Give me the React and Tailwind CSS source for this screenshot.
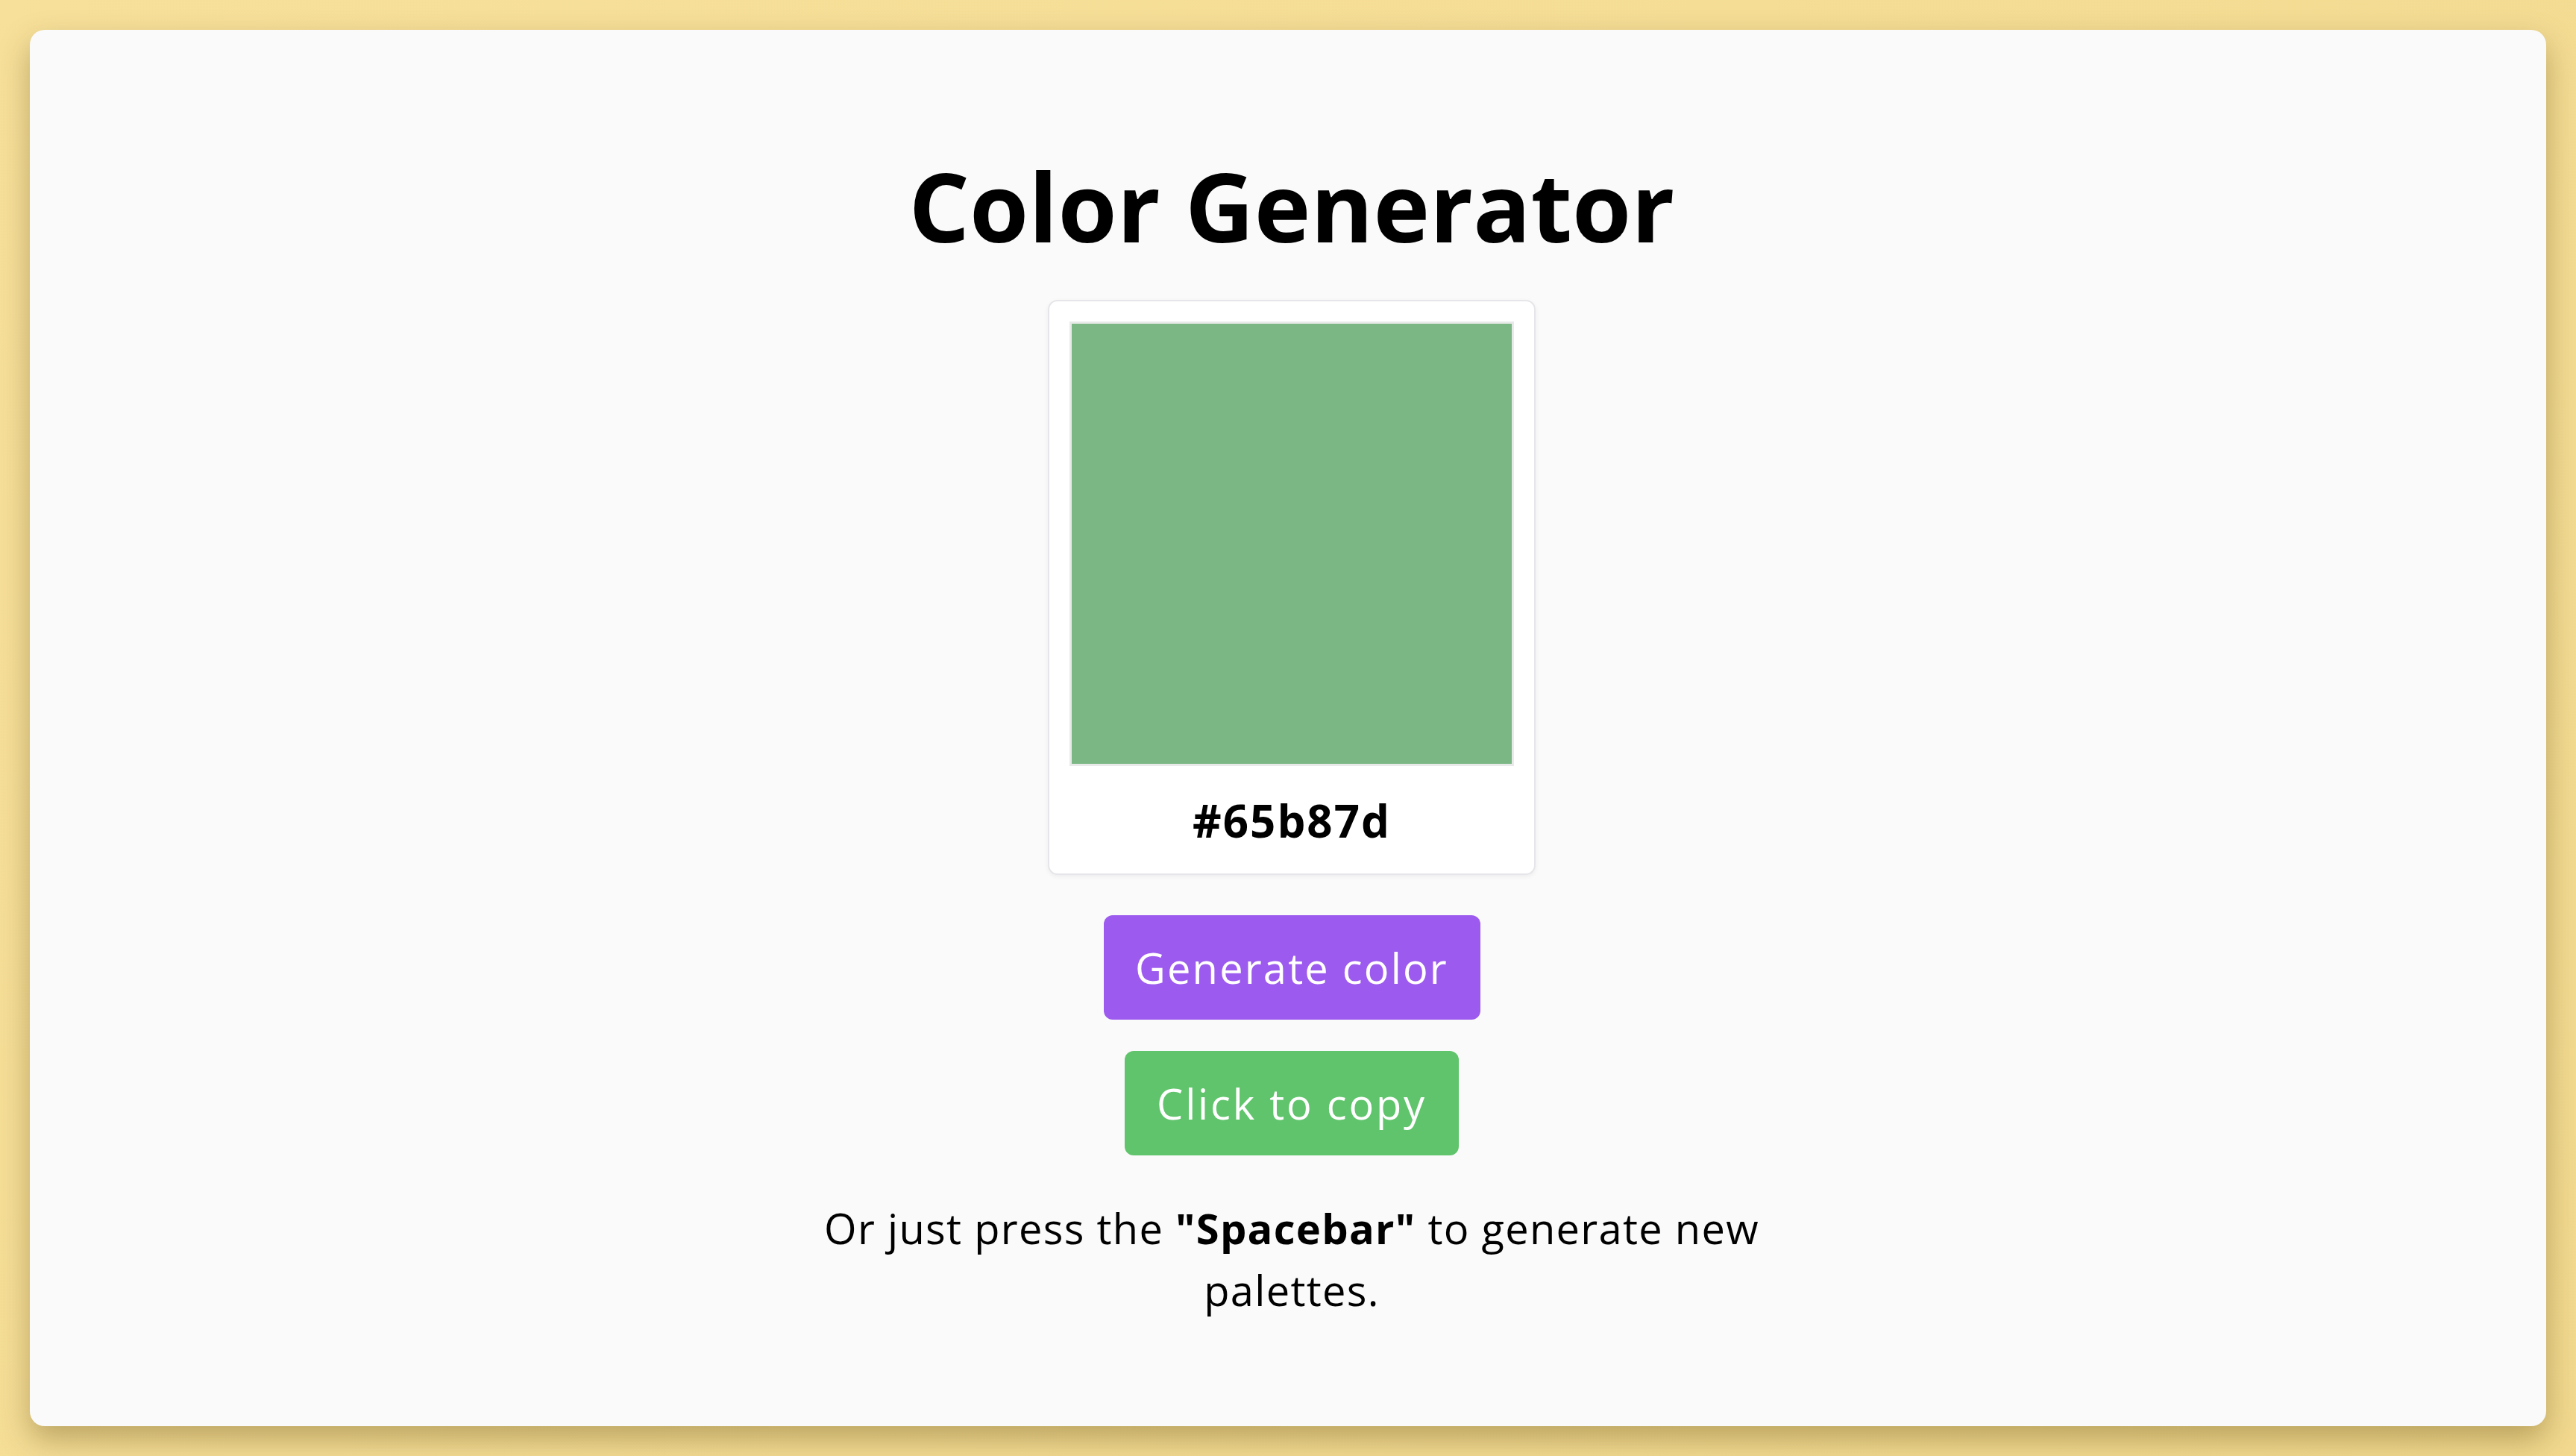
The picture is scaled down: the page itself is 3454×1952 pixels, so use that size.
export default function App() {
  return (
    <div className="min-h-screen w-full bg-[linear-gradient(135deg,#f7e09a_0%,#f2d98f_100%)] p-[40px]" style={{ height: 1952 }}>
      <div className="h-[1872px] w-full rounded-[20px] bg-[#fafafa] shadow-[0_18px_40px_rgba(80,60,0,0.35)] flex flex-col items-center pt-[172px] pl-[10px] font-['Open_Sans',sans-serif] text-black">
        <h1 className="text-[128px] leading-[128px] font-bold tracking-[0px] m-0">Color Generator</h1>
        <div className="mt-[62px] w-[654px] rounded-[13px] border-2 border-[#e6e6ea] bg-white px-[27px] pt-[27px] pb-[40px] shadow-[0_2px_6px_rgba(0,0,0,0.06)] flex flex-col items-center">
          <div className="w-[596px] h-[596px] border-[3px] border-[#e8eae9] bg-[#7bb784]" />
          <div className="mt-[42px] text-[60px] leading-[62px] font-bold tracking-[2px]">#65b87d</div>
        </div>
        <button className="mt-[54px] h-[140px] w-[505px] rounded-[12px] bg-[#9c5aee] text-white text-[56px] tracking-[2.2px] flex items-center justify-center">Generate color</button>
        <button className="mt-[42px] h-[140px] w-[448px] rounded-[12px] bg-[#60c46c] text-white text-[56px] tracking-[2.8px] flex items-center justify-center">Click to copy</button>
        <p className="mt-[56px] text-center text-[56px] leading-[83px] tracking-[1.3px]">
          Or just press the <b>"Spacebar"</b> to generate new
          <br />
          palettes.
        </p>
      </div>
    </div>
  );
}
